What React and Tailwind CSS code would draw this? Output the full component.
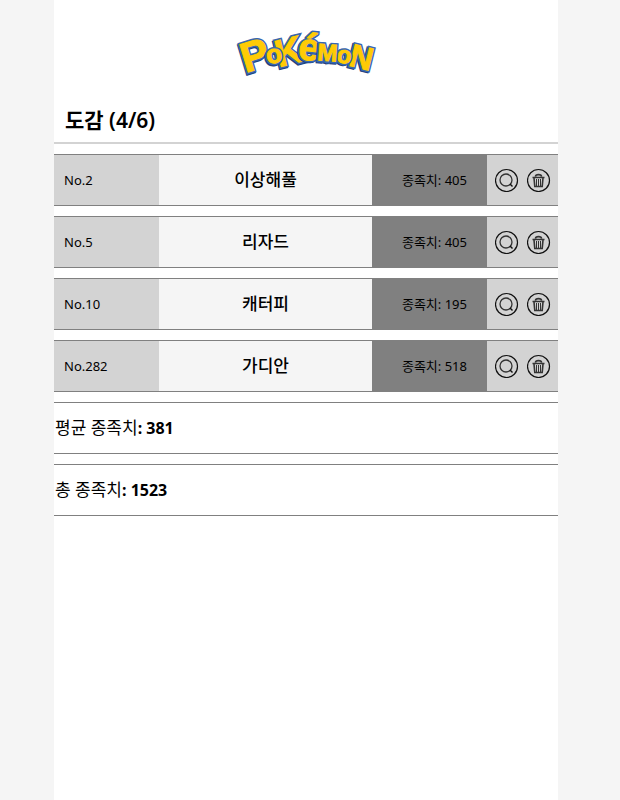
const entries = [
  { no: 2, name: "이상해풀", total: 405 },
  { no: 5, name: "리자드", total: 405 },
  { no: 10, name: "캐터피", total: 195 },
  { no: 282, name: "가디안", total: 518 },
];

const letters = [
  { char: "P", x: 29, y: 49, size: 42, turn: -17 },
  { char: "K", x: 62, y: 44, size: 38, turn: -14 },
  { char: "o", x: 45, y: 43, size: 26, turn: -8 },
  { char: "é", x: 78, y: 40, size: 38, turn: 6 },
  { char: "N", x: 129, y: 48, size: 32, turn: 14 },
  { char: "o", x: 113, y: 43, size: 24, turn: 10 },
  { char: "M", x: 97, y: 41, size: 24, turn: 4 },
];

function Logo() {
  return (
    <svg
      role="img"
      aria-label="Pokémon"
      viewBox="8 5 136 50"
      className="h-[50px] w-[136px] overflow-visible font-['Liberation_Sans'] font-bold"
      textAnchor="middle"
    >
      {letters.map(({ char, x, y, size, turn }, i) => (
        <g key={i} fontSize={size} transform={`translate(${x} ${y}) rotate(${turn})`}>
          <text x="-1" y="1" fill="#20417f" stroke="#20417f" strokeWidth="4">{char}</text>
          <text fill="#3867b0" stroke="#3867b0" strokeWidth="4">{char}</text>
          <text fill="#ffcb05" stroke="#ffcb05" strokeWidth="1">{char}</text>
        </g>
      ))}
    </svg>
  );
}

function SearchIcon() {
  return (
    <svg viewBox="0 0 24 24" className="size-6" fill="none" stroke="#111" aria-hidden="true">
      <circle cx="11.5" cy="12.5" r="11" strokeWidth="1.2" />
      <circle cx="11" cy="12" r="6" stroke="#333" strokeWidth="1.3" />
      <path d="M15 16 17.5 18.5" strokeWidth="1.4" />
    </svg>
  );
}

function TrashIcon() {
  return (
    <svg viewBox="0 0 24 24" className="size-6" fill="none" stroke="#333" aria-hidden="true">
      <circle cx="11.5" cy="12.5" r="11" stroke="#111" strokeWidth="1.2" />
      <path d="M8.5 8.5c0-2.5 6-2.5 6 0M5.5 9.5h12M7 10l.8 8.5h7.4l.8-8.5" strokeWidth="1.6" />
      <path d="M9.5 11v7M11.5 11v7M13.5 11v7" strokeWidth="1" />
    </svg>
  );
}

function Entry({ no, name, total }) {
  return (
    <li className="grid h-[52px] grid-cols-[105fr_213fr_115fr_71fr] items-stretch border-y border-[#808080]">
      <span className="flex items-center bg-[#d3d3d3] pt-0.5 pl-2.5 text-[13px]">No.{no}</span>
      <strong className="flex items-center justify-center bg-[#f5f5f5] text-[17px] font-medium">{name}</strong>
      <span className="flex items-center justify-end bg-[#808080] pt-0.5 pr-5 text-[13px]">종족치: {total}</span>
      <span className="flex items-center justify-center gap-2 bg-[#d3d3d3]">
        <button type="button" aria-label={`${name} 보기`}><SearchIcon /></button>
        <button type="button" aria-label={`${name} 삭제`}><TrashIcon /></button>
      </span>
    </li>
  );
}

function Summary({ label, value }) {
  return (
    <p className="flex h-[52px] items-center border-y border-[#808080] pl-px text-base font-bold">
      <span><span className="text-[17px] font-normal">{label}</span>: {value}</span>
    </p>
  );
}

export default function App() {
  return (
    <div className="min-h-screen bg-[#f5f5f5] pr-[62px] pl-[54px] font-['Noto_Sans','Noto_Sans_CJK_KR',sans-serif] text-black">
      <main className="min-h-screen bg-white">
        <header className="flex h-[100px] items-center justify-center">
          <Logo />
        </header>
        <h1 className="flex h-11 items-center border-b-2 border-[#d3d3d3] px-[11px] text-[21px] font-semibold">
          도감 (4/6)
        </h1>
        <ul className="mt-2.5 flex flex-col gap-2.5">
          {entries.map((entry) => (
            <Entry key={entry.no} {...entry} />
          ))}
        </ul>
        <section className="mt-2.5 flex flex-col gap-2.5">
          <Summary label="평균 종족치" value={381} />
          <Summary label="총 종족치" value={1523} />
        </section>
      </main>
    </div>
  );
}
